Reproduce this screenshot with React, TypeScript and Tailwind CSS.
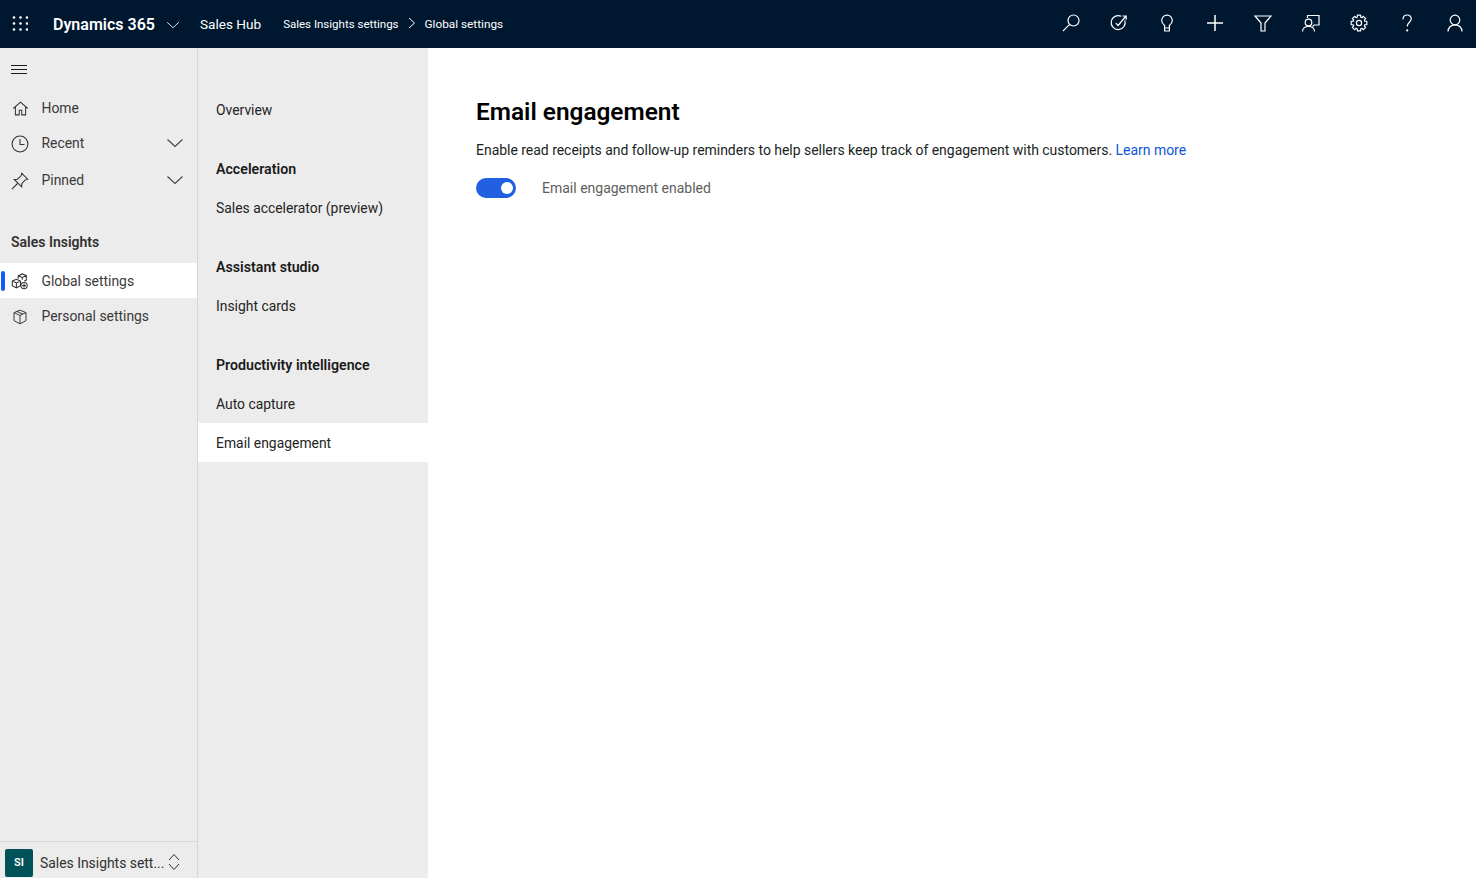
import React from 'react'

const stroke = { fill: 'none', stroke: 'currentColor', strokeWidth: 1.2 }

function Ico({ size = 20, children, className }: { size?: number; children: React.ReactNode; className?: string }) {
  return (
    <svg width={size} height={size} viewBox="0 0 20 20" className={className} {...stroke}>
      {children}
    </svg>
  )
}

function Chevron({ className }: { className?: string }) {
  return (
    <svg width="18" height="10" viewBox="0 0 18 10" className={className} fill="none" stroke="currentColor" strokeWidth="1.1">
      <path d="M1.5 1.5 L9 8.5 L16.5 1.5" />
    </svg>
  )
}

function Waffle() {
  const dots = [0, 1, 2]
  return (
    <svg width="16" height="16" viewBox="0 0 16 16" fill="white">
      {dots.map((r) => dots.map((c) => <circle key={`${r}-${c}`} cx={c * 6.5 + 2} cy={r * 6 + 1.5} r="1.3" />))}
    </svg>
  )
}

// contorno del engranaje: 8 dientes alrededor del centro
function gearPoints() {
  const pts: string[] = []
  for (let i = 0; i < 8; i++) {
    const a = (i * Math.PI) / 4
    const offsets: [number, number][] = [[6, -0.3], [8, -0.2], [8, 0.2], [6, 0.3]]
    offsets.forEach(([r, d]) => {
      pts.push(`${(10 + r * Math.cos(a + d)).toFixed(2)},${(10 + r * Math.sin(a + d)).toFixed(2)}`)
    })
  }
  return pts.join(' ')
}

const topIcons: React.ReactNode[] = [
  <path key="s" d="M12.5 2a5.5 5.5 0 1 1 0 11 5.5 5.5 0 0 1 0-11zM8.6 11.4 2 18" />,
  <g key="t">
    <path d="M15.8 7.400A7 7 0 1 1 12.200 3.300" />
    <path d="M6.800 10.200l2.300 2.300 7.900-9.500M13.500 3h3.700v3.800" />
  </g>,
  <path key="b" d="M7.6 15v-2.6C6 11.2 4.7 9.6 4.7 7.4a5.3 5.3 0 0 1 10.6 0c0 2.2-1.3 3.800-2.900 5V15zM7.600 18h4.800V15H7.600z" />,
  <path key="p" strokeWidth="1.5" d="M10 2v16M2 10h16" />,
  <path key="f" d="M2 3h16l-6 7v8h-4v-8z" />,
  <g key="c">
    <path d="M6.500 5V2.500h11.500V12h-5l-1.500 1.600" />
    <circle cx="7.500" cy="9.500" r="3.300" />
    <path d="M1.500 18.500c0-3 2.600-5.200 6-5.200s6 2.200 6 5.200" />
  </g>,
  <g key="g">
    <circle cx="10" cy="10" r="2.600" />
    <polygon points={gearPoints()} strokeLinejoin="round" />
  </g>,
  <g key="h">
    <path d="M6 6.400C6 3.800 7.800 2 10.200 2s4 1.700 4 3.900c0 3.200-4 3.600-4 7.600" />
    <circle cx="10.200" cy="17.400" r=".5" fill="currentColor" />
  </g>,
  <g key="u">
    <circle cx="10" cy="7" r="4.800" />
    <path d="M3 18.500c0-3.800 2.900-6.700 7-6.700s7 2.900 7 6.700" />
  </g>,
]

function SideRow({ icon, label, chevron, active }: { icon: React.ReactNode; label: string; chevron?: boolean; active?: boolean }) {
  return (
    <div className={`relative flex h-[35px] items-center pl-[10px] pr-[13px] pt-[2px] text-[#3b3a39] ${active ? 'bg-white' : ''}`}>
      {active && <span className="absolute left-[1px] top-[8px] h-[20px] w-[4px] rounded-sm bg-[#0f5ef7]" />}
      <span className="flex w-[20px] justify-center text-[#333]">{icon}</span>
      <span className="ml-[11.5px] flex-1 text-[13.9px]">{label}</span>
      {chevron && <Chevron className="mb-[2px] text-[#444]" />}
    </div>
  )
}

function SubItem({ label, bold, active }: { label: string; bold?: boolean; active?: boolean }) {
  return (
    <div className={`flex h-[39px] items-center pl-[18px] pt-[2px] ${bold ? 'text-[14.2px] font-semibold text-[#1b1a19]' : 'text-[13.9px] text-[#242424]'} ${active ? 'bg-white' : ''}`}>
      {label}
    </div>
  )
}

export default function App() {
  return (
    <div className="flex h-[878px] w-[1476px] flex-col overflow-hidden bg-white font-['Roboto',sans-serif]">
      <header className="flex h-[48px] shrink-0 items-center bg-[#001730] text-white">
        <div className="ml-[12px] flex w-[16px] justify-center"><Waffle /></div>
        <span className="ml-[25px] pt-[2px] text-[16px] font-semibold">Dynamics 365</span>
        <Chevron className="ml-[11px] mt-[2px] h-[8px] w-[14px]" />
        <span className="ml-[20px] pt-[1px] text-[13.6px]">Sales Hub</span>
        <span className="ml-[22px] pt-[2px] text-[11.5px]">Sales Insights settings</span>
        <svg width="8" height="12" viewBox="0 0 8 12" className="mb-[3px] ml-[9px]" fill="none" stroke="currentColor"><path d="M1 1l5.500 5L1 11" /></svg>
        <span className="ml-[9px] pt-[2px] text-[11.8px]">Global settings</span>
        <div className="-mr-[3px] ml-auto flex items-center pb-[2px]">
          {topIcons.map((ic, i) => (
            <div key={i} className="flex h-[48px] w-[48px] items-center justify-center">
              <Ico>{ic}</Ico>
            </div>
          ))}
        </div>
      </header>

      <div className="flex min-h-0 flex-1">
        <aside className="flex w-[198px] shrink-0 flex-col border-r border-[#d6d6d6] bg-[#ececec]">
          <div className="flex h-[42px] items-center pl-[11px] pt-[1px]">
            <svg width="16" height="10" viewBox="0 0 16 10" stroke="#1b1a19" strokeWidth="1"><path d="M0 .5h16M0 4.500h16M0 8.500h16" /></svg>
          </div>
          <SideRow label="Home" icon={<Ico size={17}><path d="M1.500 10 10 2.500l8.500 7.500M4 8v9.500h4.500V12h3v5.500H16V8" /></Ico>} />
          <SideRow label="Recent" chevron icon={<Ico size={18}><circle cx="10" cy="10" r="8.800" /><path d="M10 4.500V10.500H15" /></Ico>} />
          <div className="h-[2px]" />
          <SideRow label="Pinned" chevron icon={<Ico size={18}><path d="M1 19 7.500 12.500M12 1.500l6.500 6.500-3 1-3.500 4-.2 3.500-8.300-8.300 3.500-.2 4-3.500z" /></Ico>} />
          <div className="flex h-[62px] items-end pb-[6px] pl-[11px] text-[14px] font-semibold text-[#323130]">Sales Insights</div>
          <div className="h-[4px]" />
          <SideRow active label="Global settings" icon={<Ico size={18}><path d="M8 3 12.500 1 17 3v5l-2.500 1M8 3l4.500 2L17 3M12.500 5v2.500M8 3v3.500M1.500 9 6 7l4.500 2v5L6 16.500 1.500 14zM1.500 9 6 11l4.500-2M6 11v5.500" /><circle cx="14.500" cy="14" r="3.500" /><path d="M14.500 12v4M12.500 14h4" /></Ico>} />
          <SideRow label="Personal settings" icon={<Ico size={16}><path d="M10 1.500 17.500 4.500v10L10 18.500 2.500 14.500v-10zM2.500 4.500 10 8l7.500-3.500M10 8v10.500M6 3l7.500 3.300" /></Ico>} />
          <div className="mt-auto flex h-[37px] items-start border-t border-[#d6d6d6] pl-[5px] pt-[7px]">
            <span className="flex h-[28px] w-[28px] items-center justify-center rounded-[2px] bg-[#005158] text-[11px] font-semibold text-white">SI</span>
            <span className="ml-[7px] mt-[4px] w-[126px] whitespace-nowrap text-[13.9px] text-[#323130]">Sales Insights sett...</span>
            <svg width="12" height="18" viewBox="0 0 12 18" fill="none" stroke="#323130" strokeWidth="1" className="ml-[2px] mt-[4px]"><path d="M1 7l5-5.500L11 7M1 11l5 5.500L11 11" /></svg>
          </div>
        </aside>

        <nav className="w-[230px] shrink-0 bg-[#ececec] pt-[42px]">
          <SubItem label="Overview" />
          <div className="h-[20px]" />
          <SubItem bold label="Acceleration" />
          <SubItem label="Sales accelerator (preview)" />
          <div className="h-[20px]" />
          <SubItem bold label="Assistant studio" />
          <SubItem label="Insight cards" />
          <div className="h-[20px]" />
          <SubItem bold label="Productivity intelligence" />
          <SubItem label="Auto capture" />
          <SubItem active label="Email engagement" />
        </nav>

        <main className="flex-1 pl-[48px] pt-[48px]">
          <h1 className="text-[24.4px] font-semibold leading-[32px] text-black">Email engagement</h1>
          <p className="mt-[12px] text-[14px] leading-[20px] tracking-[-0.03px] text-[#201f1e]">
            Enable read receipts and follow-up reminders to help sellers keep track of engagement with customers.{' '}
            <span className="text-[#0f54d8]">Learn more</span>
          </p>
          <div className="mt-[18px] flex h-[20px] items-center">
            <span className="flex h-[20px] w-[40px] items-center justify-end rounded-full bg-[#2160e0] pr-[3px]">
              <span className="h-[12px] w-[12px] rounded-full bg-white" />
            </span>
            <span className="ml-[26px] text-[14px] text-[#605e5c]">Email engagement enabled</span>
          </div>
        </main>
      </div>
    </div>
  )
}
